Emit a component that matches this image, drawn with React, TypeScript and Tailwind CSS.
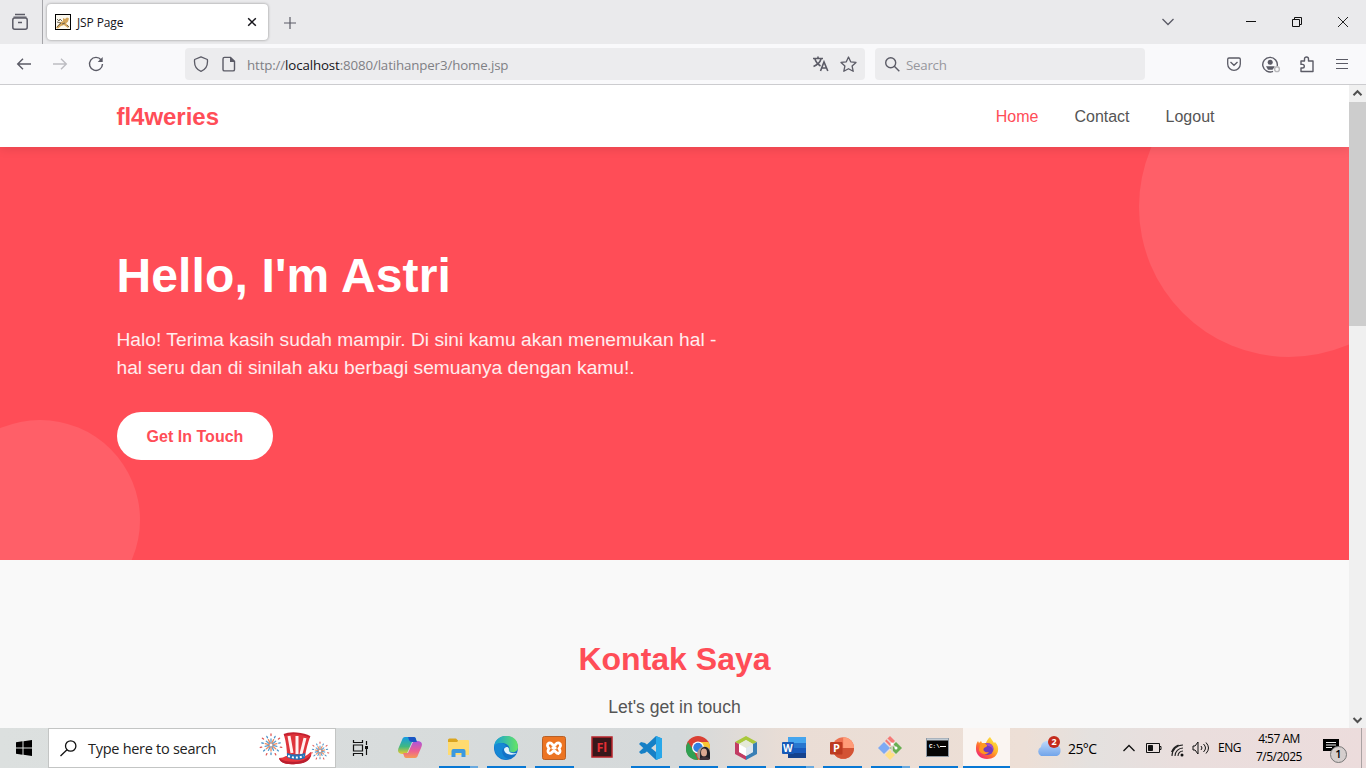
import React from "react";

const ui = "font-['Open_Sans','Noto_Sans',sans-serif]";

function TabStrip() {
  return (
    <div className="flex h-11 bg-[#eaeaec] text-[#5b5b66]">
      <div className="flex w-[43px] shrink-0 items-center border-r border-[#a5a5a9] pl-[11px]">
        <svg width="18" height="18" viewBox="0 0 18 18" fill="none" stroke="currentColor" strokeWidth="1.5">
          <path d="M4 1.500h10M2.500 4.200h13" strokeWidth="1.3" />
          <rect x="1.8" y="5" width="14.4" height="11.3" rx="2" />
          <path d="M7 9.5h4" />
        </svg>
      </div>
      <div className="ml-1 mt-1 flex h-9 w-[221px] items-center rounded bg-white pl-2 pr-[11px] shadow-[0_0_3px_rgba(0,0,0,0.4)]">
        <svg width="16" height="16" viewBox="0 0 16 16">
          <rect x=".5" y=".5" width="15" height="15" fill="#fbf8ee" stroke="#000" />
          <path d="M8 4l2 1 2-1.500 2 1-1 3-2 2 3 3-1 1.500-4-3-3 1-3 2.500-2-.5 2-3 3-3 2-1z" fill="#d2a45a" />
          <path d="M2 5l2 2 1-2 2 2M2 8l4 1-4 4M7 10l3-1M12 11l2 2" stroke="#635a48" fill="none" strokeWidth=".9" />
        </svg>
        <span className={`${ui} ml-[6px] flex-1 pt-0.5 text-[12px] tracking-[-0.12px] text-[#15141a]`}>JSP Page</span>
        <svg width="10" height="10" viewBox="0 0 10 10" stroke="#15141a" strokeWidth="1.5"><path d="M1.200 1.200l7.600 7.600M8.800 1.200L1.200 8.800" /></svg>
      </div>
      <svg className="ml-4 mt-[17px]" width="12" height="12" viewBox="0 0 12 12" stroke="currentColor" strokeWidth="1.2"><path d="M6 0v12M0 6h12" /></svg>
      <div className="ml-auto flex items-center pr-[18px]">
        <svg width="12" height="8" viewBox="0 0 12 8" fill="none" stroke="currentColor" strokeWidth="1.3"><path d="M.5 1L6 6.5 11.5 1" /></svg>
        <svg className="ml-[72px]" width="10" height="10" viewBox="0 0 10 10" stroke="#111"><path d="M0 4.5h10" /></svg>
        <svg className="ml-9" width="10" height="10" viewBox="0 0 10 10" fill="none" stroke="#111"><path d="M.5 2.5h7v7h-7zM2.5 2.5v-2h7v7h-2" /></svg>
        <svg className="ml-9" width="10" height="10" viewBox="0 0 10 10" stroke="#222"><path d="M0 0l10 10M10 0L0 10" /></svg>
      </div>
    </div>
  );
}

function Toolbar() {
  return (
    <div className="flex h-[41px] items-center border-b border-[#cccccf] bg-[#f9f9fb] text-[#5b5b66]">
      <svg className="ml-4" width="16" height="16" viewBox="0 0 16 16" fill="none" stroke="currentColor" strokeWidth="1.4"><path d="M15 8H1.7M7 2.7L1.7 8 7 13.3" /></svg>
      <svg className="ml-5" width="16" height="16" viewBox="0 0 16 16" fill="none" stroke="#bdbdc2" strokeWidth="1.4"><path d="M1 8h13.3M9 2.7L14.3 8 9 13.3" /></svg>
      <svg className="ml-5" width="16" height="16" viewBox="0 0 16 16" fill="none" stroke="currentColor" strokeWidth="1.4"><path d="M13.2 4A6.5 6.5 0 1 0 14.5 8" /><path d="M14.7 1v5h-5z" fill="currentColor" stroke="none" /></svg>
      <div className="ml-[81px] flex h-8 w-[680px] items-center rounded bg-[#ececee] pl-2 pr-2">
        <svg width="16" height="16" viewBox="0 0 16 16" fill="none" stroke="currentColor" strokeWidth="1.3"><path d="M8 .8l6.4 2.7c.6 5.8-1.6 10-6.4 11.8C3.200 13.500 1 9.300 1.600 3.500z" strokeLinejoin="round" /></svg>
        <svg className="ml-3" width="16" height="16" viewBox="0 0 16 16" fill="none" stroke="currentColor" strokeWidth="1.4"><path d="M3.500 1.400h6l4 4v8a1.500 1.500 0 0 1-1.500 1.500H3.500A1.500 1.500 0 0 1 2 13.400v-10.500a1.500 1.500 0 0 1 1.500-1.500z" /><path d="M9 1v5h5z" fill="currentColor" stroke="none" /></svg>
        <span className={`${ui} ml-[10px] flex-1 pt-[3px] text-[13.3px] tracking-[-0.13px] text-[#808085]`}>http://<span className="text-[#15141a]">localhost</span>:8080/latihanper3/home.jsp</span>
        <svg width="18" height="16" viewBox="0 0 18 16" fill="none" stroke="currentColor" strokeWidth="1.6"><path d="M1 2.500h10M6 .5v2M3 3c1 4 4 6 5.500 7M9 3C8 6.500 5 9 1.500 10.500M8.500 15l3.500-9 3.800 9M9.800 12h4.800" /></svg>
        <svg className="ml-[10px]" width="17" height="17" viewBox="0 0 17 17" fill="none" stroke="currentColor" strokeWidth="1.300" strokeLinejoin="round"><path d="M8.500 1l2.200 4.800 5.300.6-3.900 3.600 1.100 5.300-4.700-2.600-4.700 2.600 1.100-5.300L1 6.400l5.300-.6z" /></svg>
      </div>
      <div className="ml-[10px] flex h-8 w-[270px] items-center rounded bg-[#ececee] pl-[10px]">
        <svg width="15" height="15" viewBox="0 0 15 15" fill="none" stroke="currentColor" strokeWidth="1.4"><circle cx="5.700" cy="5.700" r="5" /><path d="M9.300 9.300l5 5" /></svg>
        <span className={`${ui} ml-[6px] pt-[3px] text-[13.3px] tracking-[-0.25px] text-[#97979d]`}>Search</span>
      </div>
      <div className="ml-auto flex items-center pr-[18px]">
        <svg width="14" height="14" viewBox="0 0 14 14" fill="none" stroke="currentColor" strokeWidth="1.3"><path d="M2 1h10a1.300 1.300 0 0 1 1.300 1.300V7A6.300 6.300 0 0 1 .7 7V2.300A1.300 1.300 0 0 1 2 1zM3.500 5L7 8.300 10.500 5" /></svg>
        <svg className="ml-[21px]" width="19" height="17" viewBox="0 0 19 17" fill="none" stroke="currentColor" strokeWidth="1.4"><path d="M15.200 10A7.300 7.300 0 1 0 11 15.300" /><circle cx="8.200" cy="6.300" r="2.500" fill="currentColor" stroke="none" /><path d="M4 10.300h8.500v.8l-2 2.700H6z" fill="currentColor" stroke="none" /><circle cx="15" cy="13.200" r="2.400" stroke="#b8b8bb" /></svg>
        <svg className="ml-[18px] mr-px" width="16" height="17" viewBox="0 0 16 17" fill="none" stroke="currentColor" strokeWidth="1.4" strokeLinejoin="round"><path d="M2 5h3.500V3a2 2 0 0 1 4 0v2H14v10.500H2V12h1.500a1.800 1.800 0 0 0 0-3.600H2z" /></svg>
        <svg className="ml-5" width="12" height="12" viewBox="0 0 12 12" stroke="currentColor" strokeWidth="1.200"><path d="M0 1.500h12M0 5.500h12M0 10.500h12" /></svg>
      </div>
    </div>
  );
}

function Page() {
  return (
    <main className="flex h-[643px] overflow-hidden font-['Liberation_Sans',Arial,sans-serif]">
      <div className="flex min-w-0 flex-1 flex-col overflow-hidden">
        <header className="z-10 flex h-[62px] shrink-0 items-center justify-between bg-white pl-[116.5px] pr-[134.5px] pt-px shadow-[0_2px_10px_rgba(0,0,0,0.1)]">
          <span className="text-2xl font-bold tracking-[-0.03px] text-[#ff4d57]">fl4weries</span>
          <nav className="flex gap-9 text-base text-[#555]">
            <span className="text-[#ff4d57]">Home</span><span>Contact</span><span>Logout</span>
          </nav>
        </header>
        <section className="relative h-[413px] shrink-0 overflow-hidden bg-[#ff4d57] pl-[116.5px] pt-[99px] text-white">
          <div className="absolute -right-[90px] -top-[90px] size-[300px] rounded-full bg-white/10" />
          <div className="absolute -bottom-[60px] -left-[60px] size-[200px] rounded-full bg-white/10" />
          <div className="relative">
            <h1 className="text-[48px] font-bold leading-[60px] tracking-[0.13px]">Hello, I'm Astri</h1>
            <p className="mt-5 w-[610px] text-[19.2px] leading-7 tracking-[0.015px] text-white/90">Halo! Terima kasih sudah mampir. Di sini kamu akan menemukan hal - hal seru dan di sinilah aku berbagi semuanya dengan kamu!.</p>
            <button className="mt-[30px] flex h-12 w-[156px] items-center justify-center rounded-full bg-white pl-px pt-px text-base font-bold tracking-[0.02px] text-[#ff4d57]">Get In Touch</button>
          </div>
        </section>
        <section className="flex-1 bg-[#f9f9f9] pt-[80px] text-center">
          <h2 className="text-[32px] font-bold leading-[38px] text-[#ff4d57]">Kontak Saya</h2>
          <p className="mt-4 text-[17.6px] leading-[26px] text-[#555]">Let's get in touch</p>
        </section>
      </div>
      <div className="flex w-[17px] flex-col items-center bg-[#f0f0f0]">
        <svg width="17" height="17" viewBox="0 0 17 17" fill="none" stroke="#505050" strokeWidth="2"><path d="M4.500 10.200l4-4 4 4" /></svg>
        <div className="h-[224px] w-full bg-[#cdcdcd]" />
        <svg className="mt-auto" width="17" height="17" viewBox="0 0 17 17" fill="none" stroke="#505050" strokeWidth="2"><path d="M4.500 7l4 4 4-4" /></svg>
      </div>
    </main>
  );
}

function Burst() {
  return (
    <g strokeWidth="1.300" strokeLinecap="round">
      {Array.from({ length: 14 }, (_, i) => (
        <g key={i} transform={`rotate(${i * 25.7})`}>
          <path d="M0-2V-6" stroke={i % 2 ? "#e98b62" : "#5b9fd0"} />
          <path d={i % 2 ? "M0-8V-9.500" : "M0-9.500V-11"} stroke={i % 2 ? "#4b91c6" : "#df5956"} />
        </g>
      ))}
    </g>
  );
}

function Hat() {
  return (
    <svg width="76" height="36" viewBox="0 0 76 36">
      <g transform="translate(12 15)"><Burst /></g>
      <g transform="translate(61 21) scale(.82)"><Burst /></g>
      <path d="M20 28c3 0 5-1 7-2l19 0c3-1 5-4 6-4 2 5-4 11-15 12-9 1-16-1-17-6z" fill="#e8353c" />
      <path d="M20 28c8 6 25 5 32-3-1 6-7 9-15 9-9 1-16-1-17-6z" fill="#b91f2f" />
      <path d="M25 5c7-3 20-2 26 2-2 6-4 12-5 20-6 4-13 3-18 0 0-8-1-15-3-22z" fill="#df343b" />
      <path d="M30 6l3 17M38 6v18M46 8l-4 16" stroke="#fff0ef" strokeWidth="3" />
      <path d="M25 5c6-3 19-2 26 2" fill="none" stroke="#c5202f" strokeWidth="2" />
      <path d="M28 23c6 2 12 2 18 0v5c-6 3-13 2-18-1z" fill="#2472b7" />
      <path d="M29 26q8 3 16 0" fill="none" stroke="#fff" strokeWidth="2" strokeDasharray="2 2" />
    </svg>
  );
}

const apps: { name: string; line: number; split?: boolean; active?: boolean; art: React.ReactNode }[] = [
  { name: "Copilot", line: 0, art: <><defs><linearGradient id="ca" x1="0" y1="0" x2="0" y2="1"><stop stopColor="#169be4" /><stop offset=".55" stopColor="#40b881" /><stop offset="1" stopColor="#f4cb28" /></linearGradient><linearGradient id="cb" x1="0" y1="0" x2="0" y2="1"><stop stopColor="#a855e0" /><stop offset=".6" stopColor="#ed6090" /><stop offset="1" stopColor="#f69b54" /></linearGradient></defs><path d="M7 1h9c2 0 2 3 3 5h-5l-4 9c-1 3-3 4-5 3-5 0-6-3-4-7L4 4c.5-2 1.500-3 3-3z" fill="url(#ca)" /><path d="M17 22H8c-2 0-2-3-3-5h5l4-9c1-3 3-4 5-3 5 0 6 3 4 7l-3 7c-.5 2-1.500 3-3 3z" fill="url(#cb)" /><path d="M10 1h6c2 0 2 3 3 5h-5c-3 0-3-3-4-5z" fill="#1b55c4" /></> },
  { name: "Files", line: 39, split: true, art: <><path d="M2 4q0-1.500 1.500-1.500H10l3 3h8.500Q23 5.500 23 7v12H2z" fill="#dba51e" /><path d="M2 6h9l2-2h9q1 0 1 1v14H2z" fill="#ffdb70" /><path d="M5.500 21v-6q0-2 2-2h10q2 0 2 2v6h-4v-4h-6v4z" fill="#3b99df" /></> },
  { name: "Edge", line: 39, art: <><defs><linearGradient id="ed"><stop stopColor="#169fd8" /><stop offset="1" stopColor="#66e563" /></linearGradient></defs><circle cx="12" cy="12" r="12" fill="#1473c8" /><path d="M0 11C1-4 24-4 24 11c0 6-7 6-9 4 2-4-2-8-7-8-4 0-7 2-8 4z" fill="url(#ed)" /><path d="M10 13c1-2 4-3 5 0-1 3 3 5 8 4-4 3-13 2-13-4z" fill="#e3f4fd" /><path d="M1 9c5-4 11-1 11 2-6 1-5 10 3 12C5 25-1 17 1 9z" fill="#1688d5" /></> },
  { name: "XAMPP", line: 39, art: <><rect x=".5" y=".5" width="23" height="23" rx="2" fill="#ec7422" stroke="#b86026" /><path d="M7 7c3-1 3 2 5 3 2-1 2-4 5-3 3 2 1 4 0 5.500 1 1.500 2 4-.5 5-2.500 0-2.500-2-4.500-3-2 1-2 3-4.500 3-2.500-1-1.500-3.500-.5-5C6 11 4 9 7 7z" fill="none" stroke="white" strokeWidth="2.800" /><path d="M9.500 12h5" stroke="white" strokeWidth="2.500" /></> },
  { name: "Flash", line: 0, art: <><path d="M2 1h20v20H2z" fill="#38171a" stroke="#b8242b" strokeWidth="1.500" /><text x="6.500" y="15.500" fill="#e52e34" fontSize="12.500" fontWeight="700" fontFamily="Open Sans">Fl</text></> },
  { name: "Code", line: 39, art: <><path d="M18 0l6 2.500v19L18 24 1 8l2-2 4 1 11 9V8L7 17l-4 1-2-2z" fill="#1680c6" /><path d="M18 0l6 2.500v19L18 24z" fill="#28a8ea" /></> },
  { name: "Chrome", line: 39, art: <><circle cx="12" cy="12" r="12" fill="#da4034" /><path d="M2 6l6 9 4 9C1 24-3 14 2 6z" fill="#30a052" /><path d="M12 6h10.500C27 14 22 24 12 24l6-9z" fill="#fac733" /><circle cx="12" cy="11.500" r="6" fill="#fff" /><circle cx="12" cy="11.500" r="4.700" fill="#327fe1" /><circle cx="18.500" cy="18" r="7.500" fill="#a89890" /><path d="M14 24c0-8 0-13 5-13 4 0 6 6 5 12z" fill="#202026" /><ellipse cx="18" cy="16.500" rx="3" ry="4" fill="#dba992" /><path d="M13 23c5-4 9-2 11 0-3 2-8 3-11 0z" fill="#403339" /></> },
  { name: "NetBeans", line: 39, art: <><path d="M12 0l11 6-4 2-7-4-7 4-4-2z" fill="#a9c83b" /><path d="M1 6l4 2v8l7 4v4L1 18z" fill="#c23c63" /><path d="M23 6l-4 2v8l-7 4v4l11-6z" fill="#397fb5" /><path d="M12 4l7 4-7 4-7-4z" fill="#e4e9d7" /><path d="M5 8l7 4v8l-7-4z" fill="#fff" /><path d="M12 12l7-4v8l-7 4z" fill="#dfe8ef" /></> },
  { name: "Word", line: 39, split: true, art: <><path d="M6 1h18v6H6z" fill="#45a5ee" /><path d="M6 7h18v5H6z" fill="#2876ce" /><path d="M6 12h18v5H6z" fill="#185abd" /><path d="M6 17h18v5H6z" fill="#15428d" /><rect y="6" width="12" height="12" rx="1" fill="#1759b7" /><text x="1" y="15.500" fill="white" fontSize="10" fontWeight="700" fontFamily="Open Sans">W</text></> },
  { name: "PowerPoint", line: 39, art: <><circle cx="13.200" cy="12" r="10.800" fill="#ed7050" /><path d="M13.200 1.200a10.800 10.800 0 0 1 10.800 10.800h-10.800z" fill="#ff9c78" /><path d="M2.400 12H24a10.800 10.800 0 0 1-21.600 0z" fill="#d35334" /><rect y="6" width="12.500" height="12.500" rx="1" fill="#bd3b20" /><text x="3" y="16" fill="white" fontSize="11" fontWeight="700" fontFamily="Open Sans">P</text></> },
  { name: "Git", line: 39, split: true, art: <><path d="M12 0l5 5-5 5-5-5z" fill="#f57976" /><path d="M6 6l6 6-6 6-6-6z" fill="#7eaaf3" /><path d="M18 6l6 6-6 6-6-6z" fill="#68af52" /><path d="M12 14l5 5-5 5-5-5z" fill="#ffe084" /><path d="M9 3l9 9M14 7v10" stroke="#e5d9d3" strokeWidth="1.500" /><circle cx="14" cy="8" r="1.500" fill="#fff" /><circle cx="18" cy="12" r="1.500" fill="#fff" /></> },
  { name: "Terminal", line: 39, art: <><rect x=".5" y="2.500" width="22" height="18" fill="#050505" stroke="#8e9aa5" /><path d="M1 3.500h21" stroke="#c4cdd5" strokeWidth="2" /><text x="3" y="12" fill="white" fontSize="6" fontWeight="700" fontFamily="Liberation Mono">C:\</text><path d="M14 10.500h6" stroke="white" /></> },
  { name: "Firefox", line: 47, active: true, art: <><defs><linearGradient id="fx" x1=".9" y1="0" x2=".15" y2=".9"><stop stopColor="#fff044" /><stop offset=".45" stopColor="#ffb02a" /><stop offset=".7" stopColor="#ff6b32" /><stop offset="1" stopColor="#f12a74" /></linearGradient></defs><path d="M15 1c2 3 3 4 4 6l1-1c3 3 3.500 6 3 9-1 5-5 8-11 8S1 19 1 13c0-3 0-5 2-8l1 2 2-2 1 2 4 0c1-3 2-4 4-6z" fill="url(#fx)" /><circle cx="12.500" cy="13" r="6" fill="#743bc0" /><path d="M5 9c2-2 5-2 7 0 1 1-1 2-3 3-2 3 2 5 5 4-3 4-9 2-10-2z" fill="#ff9820" /><path d="M11 7c5 0 8 3 7 7-1-3-3-4-5-4z" fill="#a44bce" /></> },
];

function Taskbar() {
  return (
    <footer className={`${ui} flex h-10 bg-[linear-gradient(90deg,#dce0df_0%,#d5d9da_50%,#eaddd5_58%,#eddfd6_75%,#e4e1df_80%,#eadedd_87%,#ecdcdc_100%)] text-black`}>
      <div className="flex w-12 items-center pl-4">
        <svg width="16" height="16" viewBox="0 0 16 16"><path d="M0 2.200l6.500-.9v6.200H0zM7.500 1.200L16 0v7.500H7.500zM0 8.500h6.500v6.200L0 13.800zM7.500 8.500H16V16l-8.500-1.200z" /></svg>
      </div>
      <div className="flex w-[288px] items-center border border-[#c3c5c4] bg-white pl-[11px]">
        <svg width="17" height="17" viewBox="0 0 17 17" fill="none" stroke="#111" strokeWidth="1.300"><circle cx="10.700" cy="6" r="5.200" /><path d="M7 9.700L.5 16" /></svg>
        <span className="ml-[11px] w-[171px] pt-px text-[14.500px] tracking-[-0.28px] text-[#222]">Type here to search</span>
        <Hat />
      </div>
      <div className="flex w-[50px] items-center justify-center pr-0.5">
        <svg width="17" height="16" viewBox="0 0 17 16" fill="none" stroke="#111" strokeWidth="1.200"><path d="M1.500 0v2.500h9V0M1.500 16v-2.500h9V16M1.500 5h9v6h-9zM14.500 1v4M14.500 9v6" /><path d="M13 6h3v3h-3z" fill="#111" stroke="none" /></svg>
      </div>
      {apps.map((app) => (
        <div key={app.name} className={app.active ? "ml-px flex w-[47px] flex-col items-center bg-[#faf5f2] pt-2" : "flex w-12 flex-col items-center pt-2"}>
          <svg width="24" height="24" viewBox="0 0 24 24">{app.art}</svg>
          {app.line > 0 && <div className="mt-auto flex h-0.5 shrink-0 bg-[#0878d4]" style={{ width: app.line }}>{app.split && <span className="ml-auto w-2 bg-[#68a9df]" />}</div>}
        </div>
      ))}
      <div className="ml-[26px] flex items-center">
        <div className="relative">
          <svg width="25" height="22" viewBox="0 0 25 22"><defs><linearGradient id="cl" x1="0" y1="0" x2="0" y2="1"><stop stopColor="#bdd8fa" /><stop offset="1" stopColor="#71a4ea" /></linearGradient></defs><path d="M5 19a5 5 0 0 1 0-9C6 3 14 2 17 8c5-1 8 2 7.500 6 0 3-2 5-5 5z" fill="url(#cl)" /></svg>
          <span className="absolute -top-px left-3 flex size-3 items-center justify-center rounded-full bg-[#c42b1c] text-[9px] font-bold text-white">2</span>
        </div>
        <span className="ml-[7px] w-[55px] text-[14px] tracking-[-0.6px]">25°C</span>
        <svg width="12" height="8" viewBox="0 0 12 8" fill="none" stroke="#111" strokeWidth="1.300"><path d="M.5 7L6 1.500 11.500 7" /></svg>
        <svg className="ml-[11px]" width="16" height="10" viewBox="0 0 16 10" fill="none" stroke="#111"><path d="M.5.5h13v9H.5zM14 3.500h1v3h-1" /><path d="M2.500 2.500h4v5h-4z" fill="#111" /></svg>
        <svg className="ml-[9px] mt-1" width="13" height="13" viewBox="0 0 13 13" fill="none" stroke="#222" strokeWidth="1.100"><path d="M1 12A11 11 0 0 1 12 1M4 12a8 8 0 0 1 8-8M7 12a5 5 0 0 1 5-5M.5 8a12 12 0 0 1 7-7" /><circle cx="11" cy="11" r="1.500" fill="#111" stroke="none" /></svg>
        <svg className="ml-2" width="18" height="14" viewBox="0 0 18 14" fill="none" stroke="#111"><path d="M1 5h2l3-4v12L3 9H1zM9 5q2 2 0 4M11.500 3q4 4 0 8M14 1.500q5 5.500 0 11" /></svg>
        <span className="ml-[8px] text-[12px] tracking-[-0.5px]">ENG</span>
        <div className="ml-[13px] w-[50px] text-center text-[12px] leading-[18px] tracking-[-0.52px] whitespace-nowrap">4:57 AM<br />7/5/2025</div>
        <div className="relative ml-[19px] mt-1 h-6 w-6">
          <svg width="17" height="17" viewBox="0 0 17 17"><path d="M0 1h16v12h-4v3l-3-3H0z" /><path d="M3 4.500h10M3 7h10M3 9.500h6" stroke="#eee" /></svg>
          <span className="absolute left-[7px] top-2 flex size-[17px] items-center justify-center rounded-full border border-[#777] bg-[#d5cecd] text-[11px] font-semibold">1</span>
        </div>
      </div>
      <div className="ml-auto w-[5px] border-l border-[#aaa2a3]" />
    </footer>
  );
}

export default function App() {
  return <div className="h-[768px] w-[1366px] overflow-hidden"><TabStrip /><Toolbar /><Page /><Taskbar /></div>;
}
